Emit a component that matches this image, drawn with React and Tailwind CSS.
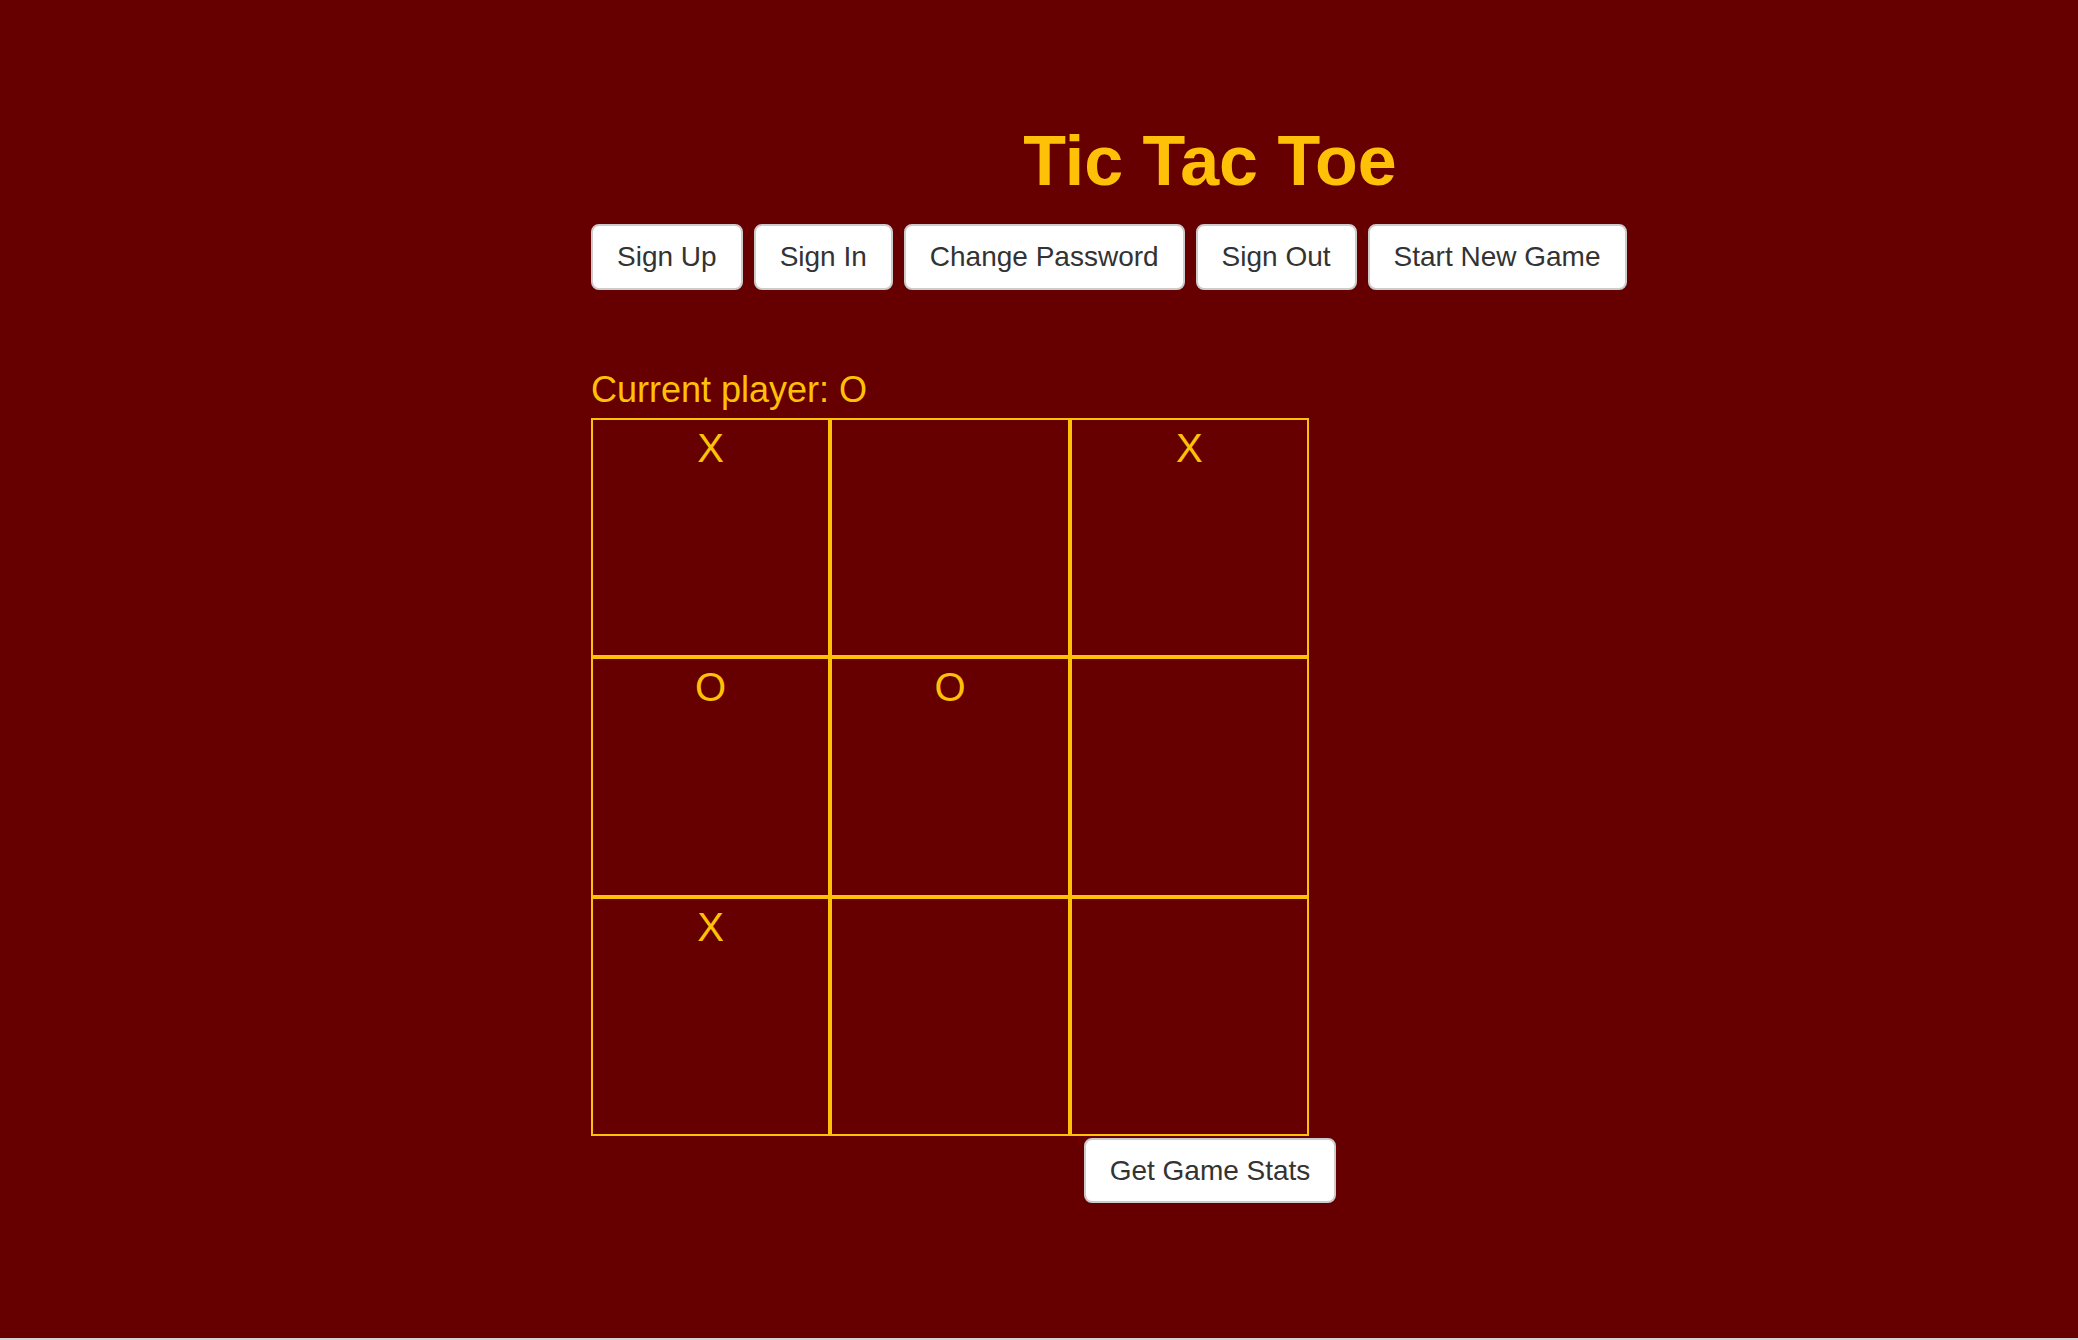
import { useState } from "react"

const board = ['X', '', 'X', 'O', 'O', '', 'X', '', '']

function NavButton({ label }) {
  return (
    <button
      type="button"
      className="h-[66px] px-[24px] bg-white border-2 border-[#cccccc] rounded-[8px] text-[28px] text-[#333333] leading-none"
    >
      {label}
    </button>
  )
}

function App() {
  const [cells] = useState(board)

  return (
    <div className="min-h-screen bg-[#660000] font-['Liberation_Sans',Arial,sans-serif] flex flex-col">
      <div className="flex-1 pt-[122px] pl-[591px]">
        <div className="w-[1238px]">
          <h1 className="text-center text-[70px] leading-[79px] font-bold text-[#ffc107]">
            Tic Tac Toe
          </h1>

          <div className="flex gap-[11px] mt-[23px]">
            <NavButton label="Sign Up" />
            <NavButton label="Sign In" />
            <NavButton label="Change Password" />
            <NavButton label="Sign Out" />
            <NavButton label="Start New Game" />
          </div>

          <h4 className="mt-[80px] text-[36px] leading-[40px] text-[#ffc107]">
            Current player: O
          </h4>

          <div className="mt-[8px] grid grid-cols-3 grid-rows-3 w-[718px] h-[718px]">
            {cells.map((mark, i) => (
              <div
                key={i}
                className="border-2 border-[#ffc107] text-center text-[40px] leading-[57px] text-[#ffc107]"
              >
                {mark}
              </div>
            ))}
          </div>

          <div className="flex justify-center mt-[2px]">
            <button
              type="button"
              className="h-[65px] px-[24px] bg-white border-2 border-[#cccccc] rounded-[8px] text-[28px] text-[#333333] leading-none"
            >
              Get Game Stats
            </button>
          </div>
        </div>
      </div>
      <div className="h-[2px] bg-[#d4d4d4]" />
    </div>
  )
}

export default App
